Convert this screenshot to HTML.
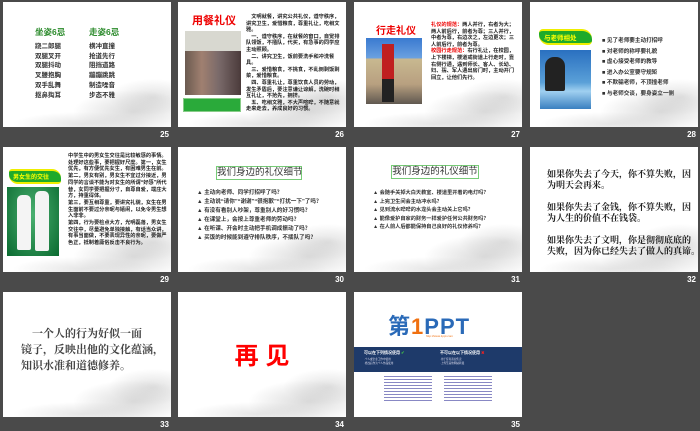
<!DOCTYPE html>
<html><head><meta charset="utf-8">
<style>
*{margin:0;padding:0;box-sizing:border-box}
body{width:700px;height:431px;background:#4a4a4a;position:relative;overflow:hidden;font-family:"Liberation Sans","Noto Sans CJK SC",sans-serif}
.s{position:absolute;width:168px;height:125px;background:#fff;overflow:hidden}
.ink{position:absolute;left:0;top:0;width:100%;height:100%;
background:radial-gradient(ellipse 60px 22px at 130px 110px,rgba(150,150,150,.35),rgba(150,150,150,0)),
radial-gradient(ellipse 45px 18px at 150px 95px,rgba(160,160,160,.3),rgba(160,160,160,0)),
radial-gradient(ellipse 70px 12px at 80px 122px,rgba(170,170,170,.3),rgba(170,170,170,0))}
.n{position:absolute;color:#fff;font-size:8px;font-weight:bold;text-align:right;width:30px}
.a{position:absolute;white-space:nowrap}
.t{position:absolute;font-size:5.2px;line-height:6.6px;color:#222;font-weight:bold}
.b{position:absolute;font-size:5.6px;line-height:8.7px;color:#333;white-space:nowrap;font-weight:bold}
</style></head><body>

<!-- 25 -->
<div class="s" style="left:3px;top:2px"><div class="ink"></div>
<div class="a" style="left:32px;top:24px;color:#2a8a2a;font-size:8.5px;font-weight:bold">坐姿6忌</div>
<div class="a" style="left:86px;top:24px;color:#2a8a2a;font-size:8.5px;font-weight:bold">走姿6忌</div>
<div class="a" style="left:32px;top:40px;font-size:6.5px;line-height:9.7px;color:#333;font-weight:bold">跷二郎腿<br>双腿叉开<br>双腿抖动<br>叉腰抱胸<br>双手乱舞<br>抠鼻掏耳</div>
<div class="a" style="left:86px;top:40px;font-size:6.5px;line-height:9.7px;color:#333;font-weight:bold">横冲直撞<br>抢道先行<br>阻挡道路<br>蹦蹦跳跳<br>制造噪音<br>步态不雅</div>
</div>
<div class="n" style="left:139px;top:130px">25</div>

<!-- 26 -->
<div class="s" style="left:178px;top:2px"><div class="ink"></div>
<div class="a" style="left:14px;top:10px;color:#e00;font-size:11px;font-weight:bold">用餐礼仪</div>
<div style="position:absolute;left:7px;top:29px;width:56px;height:64px;background:linear-gradient(90deg,#6a5a50,#a08070 30%,#7a6a6a 60%,#4a3a3a);"></div>
<div style="position:absolute;left:7px;top:29px;width:56px;height:20px;background:#d8d8d0"></div>
<div style="position:absolute;left:5px;top:96px;width:58px;height:14px;background:#2aaa3a;border:1px solid #8c8"></div>
<div class="t" style="left:68px;top:12px;width:94px">　文明就餐，讲究公共礼仪，遵守秩序，讲究卫生，爱惜粮食，尊重礼让，吃相文雅。<br>　一、遵守秩序，在就餐的窗口，自觉排队领饭，不插队，代买，有急事的同学应主动照顾。<br>　二、讲究卫生，饭前要洗手和冲洗餐具。<br>　三、爱惜粮食，不挑食，不乱倒剩饭剩菜，爱惜粮食。<br>　四、尊重礼让，尊重饮食人员的劳动，发生矛盾后，要注意谦让谅解，洗碗时相互礼让，不抢先，拥挤。<br>　五、吃相文雅，不大声喧哗，不随意就走来走去，养成良好的习惯。</div>
</div>
<div class="n" style="left:314px;top:130px">26</div>

<!-- 27 -->
<div class="s" style="left:354px;top:2px"><div class="ink"></div>
<div class="a" style="left:22px;top:20px;color:#e00;font-size:10px;font-weight:bold">行走礼仪</div>
<div style="position:absolute;left:12px;top:36px;width:56px;height:66px;background:linear-gradient(180deg,#3a7ad0 0%,#6aa0e0 30%,#c8b890 32%,#b8a080 70%,#605850 100%)"></div>
<div style="position:absolute;left:28px;top:42px;width:12px;height:58px;background:linear-gradient(#c02020 60%,#222 60%)"></div>
<div class="t" style="left:77px;top:20px;width:86px"><span style="color:#e00">礼仪的规范：</span>两人并行，右者为大；两人前后行，前者为尊；三人并行，中者为尊，右边次之，左边更次；三人前后行，前者为尊。<br><span style="color:#e00">校园行走规范：</span>右行礼让，在校园，上下楼梯，楼道或街道上行走时，靠右侧行通，遇到师长、客人、长幼、妇、孺、军人通出房门时，主动开门回立，让他们先行。</div>
</div>
<div class="n" style="left:490px;top:130px">27</div>

<!-- 28 -->
<div class="s" style="left:530px;top:2px"><div class="ink"></div>
<div style="position:absolute;left:9px;top:27px;width:53px;height:16px;background:#1faa2a;border-radius:4px 10px 4px 10px;border-top:2px solid #ee0;border-bottom:2px solid #ee0"></div>
<div class="a" style="left:14px;top:30px;color:#ff0;font-size:6.5px;font-weight:bold">与老师相处</div>
<div style="position:absolute;left:10px;top:48px;width:51px;height:59px;background:linear-gradient(180deg,#2a70c0,#5aa0d8 55%,#a0d0f0 70%,#3a80c0)"></div>
<div style="position:absolute;left:15px;top:55px;width:20px;height:34px;background:#222;border-radius:9px 9px 2px 2px"></div>
<div class="b" style="left:72px;top:34px;line-height:10.6px">■ 见了老师要主动打招呼<br>■ 对老师的称呼要礼貌<br>■ 虚心接受老师的教导<br>■ 进入办公室要守规矩<br>■ 不欺骗老师，不顶撞老师<br>■ 与老师交谈，要身姿立一侧</div>
</div>
<div class="n" style="left:666px;top:130px">28</div>

<!-- 29 -->
<div class="s" style="left:3px;top:147px"><div class="ink"></div>
<div style="position:absolute;left:6px;top:22px;width:52px;height:15px;background:#1faa2a;border-top:2px solid #ee0;border-bottom:2px solid #ee0;border-radius:3px 9px 3px 9px"></div>
<div class="a" style="left:10px;top:25px;color:#ff0;font-size:6px;font-weight:bold">男女生的交往</div>
<div style="position:absolute;left:4px;top:40px;width:52px;height:69px;background:radial-gradient(ellipse at 50% 40%,#4ab070,#0a6a30)"></div>
<div style="position:absolute;left:14px;top:48px;width:14px;height:55px;background:#f4f4f4;border-radius:5px 5px 2px 2px"></div>
<div style="position:absolute;left:32px;top:44px;width:14px;height:60px;background:#f4f4f4;border-radius:5px 5px 2px 2px"></div>
<div class="t" style="left:65px;top:6px;width:101px;line-height:6.7px">中学生中的男女生交往是比较敏感的事情。处理好这些事，要把握好尺度。第一，女生优先，有方便优先女生，有困难男生在前。<br>第二，男女有别，男女生不宜过分接近，男同学的言谈不能为对女生的所谓“好感”所代替，女同学要把握分寸，自尊自爱，端庄大方，持重得体。<br>第三，要互相尊重，要讲究礼貌，女生在男生面前不要过分亲昵与嬉闹，以免令男生想入非非。<br>第四，行为要检点大方，光明磊落，男女生交往中，尽量避免单独接触，有话当众讲，有事当面做，不要表现异性的亲昵，要做严色正，抵制着庸俗反击不良行为。</div>
</div>
<div class="n" style="left:139px;top:275px">29</div>

<!-- 30 -->
<div class="s" style="left:178px;top:147px"><div class="ink"></div>
<div class="a" style="left:38px;top:19px;width:86px;height:14px;border:1px solid #7c7;font-size:9.5px;line-height:12px;text-align:center;color:#333">我们身边的礼仪细节</div>
<div class="b" style="left:19px;top:42px;line-height:9.1px">▲ 主动向老师、同学打招呼了吗？<br>▲ 主动说“请你”“谢谢”“很抱歉”“打扰一下”了吗？<br>▲ 有没有看别人吵架，尊重别人的好习惯吗？<br>▲ 在课堂上，会按上尊重老师的劳动吗？<br>▲ 在听课、开会时主动把手机调成振动了吗？<br>▲ 买饭的时候能到遵守排队秩序，不插队了吗？</div>
</div>
<div class="n" style="left:314px;top:275px">30</div>

<!-- 31 -->
<div class="s" style="left:354px;top:147px"><div class="ink"></div>
<div class="a" style="left:37px;top:18px;width:88px;height:14px;border:1px solid #7c7;font-size:9.5px;line-height:12px;text-align:center;color:#333">我们身边的礼仪细节</div>
<div class="b" style="left:19px;top:42px;line-height:8.6px;font-size:5.2px">▲ 会随手关掉大白天教室、楼道里开着的电灯吗？<br>▲ 上完卫生间会主动冲水吗？<br>▲ 见到流水哗哗的水龙头会主动关上它吗？<br>▲ 能像爱护自家的财务一样爱护任何公共财务吗？<br>▲ 在人前人后都能保持自己良好的礼仪修养吗？</div>
</div>
<div class="n" style="left:490px;top:275px">31</div>

<!-- 32 -->
<div class="s" style="left:530px;top:147px"><div class="ink"></div>
<div class="a" style="left:17px;top:22px;font-size:9px;line-height:11px;color:#222;font-family:'Liberation Serif','Noto Serif CJK SC',serif;font-weight:bold">如果你失去了今天，你不算失败，因<br>为明天会再来。<br><br>如果你失去了金钱，你不算失败，因<br>为人生的价值不在钱袋。<br><br>如果你失去了文明，你是彻彻底底的<br>失败，因为你已经失去了做人的真谛。</div>
</div>
<div class="n" style="left:666px;top:275px">32</div>

<!-- 33 -->
<div class="s" style="left:3px;top:292px"><div class="ink"></div>
<div class="a" style="left:18px;top:34px;font-size:11px;line-height:16px;color:#444;font-family:'Liberation Serif','Noto Serif CJK SC',serif;font-weight:bold">　一个人的行为好似一面<br>镜子，反映出他的文化蕴涵，<br>知识水准和道德修养。</div>
</div>
<div class="n" style="left:139px;top:420px">33</div>

<!-- 34 -->
<div class="s" style="left:178px;top:292px"><div class="ink"></div>
<div class="a" style="left:0;width:168px;text-align:center;top:44px;font-size:24px;color:#f00;font-weight:bold">再 见</div>
</div>
<div class="n" style="left:314px;top:420px">34</div>

<!-- 35 -->
<div class="s" style="left:354px;top:292px">
<div class="a" style="left:34px;top:17px;font-size:22px;font-weight:bold;color:#2a6ab8;letter-spacing:1px">第<span style="color:#f07010">1</span>PPT</div>
<div class="a" style="left:72px;top:42px;font-size:3px;color:#f07010">http://www.1ppt.com</div>
<div style="position:absolute;left:0;top:55px;width:168px;height:25px;background:#1e3a6a"></div>
<div class="a" style="left:10px;top:58px;font-size:4px;color:#fff;font-weight:bold">可以在下列情况使用 <span style="color:#4c4">✔</span></div>
<div class="a" style="left:86px;top:58px;font-size:4px;color:#fff;font-weight:bold">不可以在以下情况使用 <span style="color:#e22">✖</span></div>
<div class="a" style="left:10px;top:66px;font-size:2.6px;line-height:4px;color:#dde">·个人或企业工作中使用<br>·修改后作为个人作品使用</div>
<div class="a" style="left:86px;top:66px;font-size:2.6px;line-height:4px;color:#dde">·用于任何商业售卖<br>·上传至其他网站转载</div>
<div style="position:absolute;left:30px;top:84px;width:48px;height:26px;background:repeating-linear-gradient(180deg,#55a 0 1px,#fff 1px 3px);opacity:.7"></div>
<div style="position:absolute;left:90px;top:84px;width:48px;height:26px;background:repeating-linear-gradient(180deg,#55a 0 1px,#fff 1px 3px);opacity:.7"></div>
</div>
<div class="n" style="left:490px;top:420px">35</div>

</body></html>
